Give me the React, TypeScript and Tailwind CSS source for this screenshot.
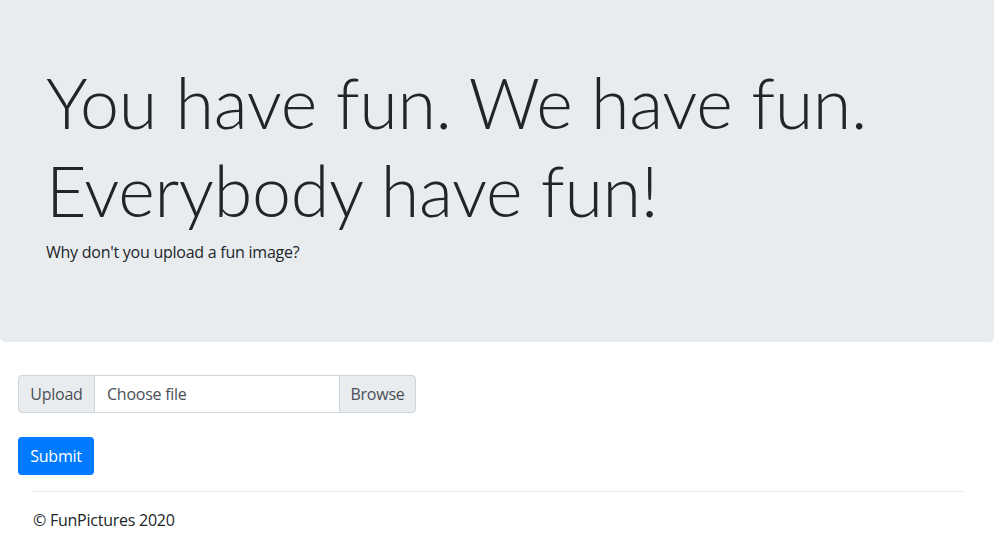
import React from "react";

export default function App() {
  return (
    <div className="min-h-[543px] bg-white text-[#212529] font-['Open_Sans',sans-serif] text-[16px] leading-[24px] tracking-[-0.25px]">
      <div className="bg-[#e9ecef] rounded-b-[5px] pl-[46px] pr-[32px] pt-[58px] pb-[78px]">
        <h1 className="font-['Lato',sans-serif] text-[70px] leading-[88px] font-light mb-[6px] tracking-[-0.3px]">
          <span className="block">You have fun. We have fun.</span>
          <span className="block">Everybody have fun!</span>
        </h1>
        <p>Why don't you upload a fun image?</p>
      </div>
      <div className="px-[18px] pt-[33px]">
        <div className="flex w-[398px] h-[38px] text-[#495057]">
          <div className="w-[77px] flex items-center justify-center bg-[#e9ecef] border border-[#ced4da] rounded-l-[4px]">
            Upload
          </div>
          <div className="flex-1 flex items-center border-y border-[#ced4da] bg-white pl-[12px] -ml-px border-l">
            Choose file
          </div>
          <div className="w-[77px] flex items-center justify-center bg-[#e9ecef] border border-[#ced4da] rounded-r-[4px]">
            Browse
          </div>
        </div>
        <button className="mt-[24px] h-[38px] w-[76px] bg-[#007bff] text-white rounded-[4px]">
          Submit
        </button>
      </div>
      <div className="px-[33px] pt-[16px]">
        <hr className="border-t border-[rgba(0,0,0,0.1)] mr-[-2px]" />
        <div className="pt-[16px]">© FunPictures 2020</div>
      </div>
    </div>
  );
}
